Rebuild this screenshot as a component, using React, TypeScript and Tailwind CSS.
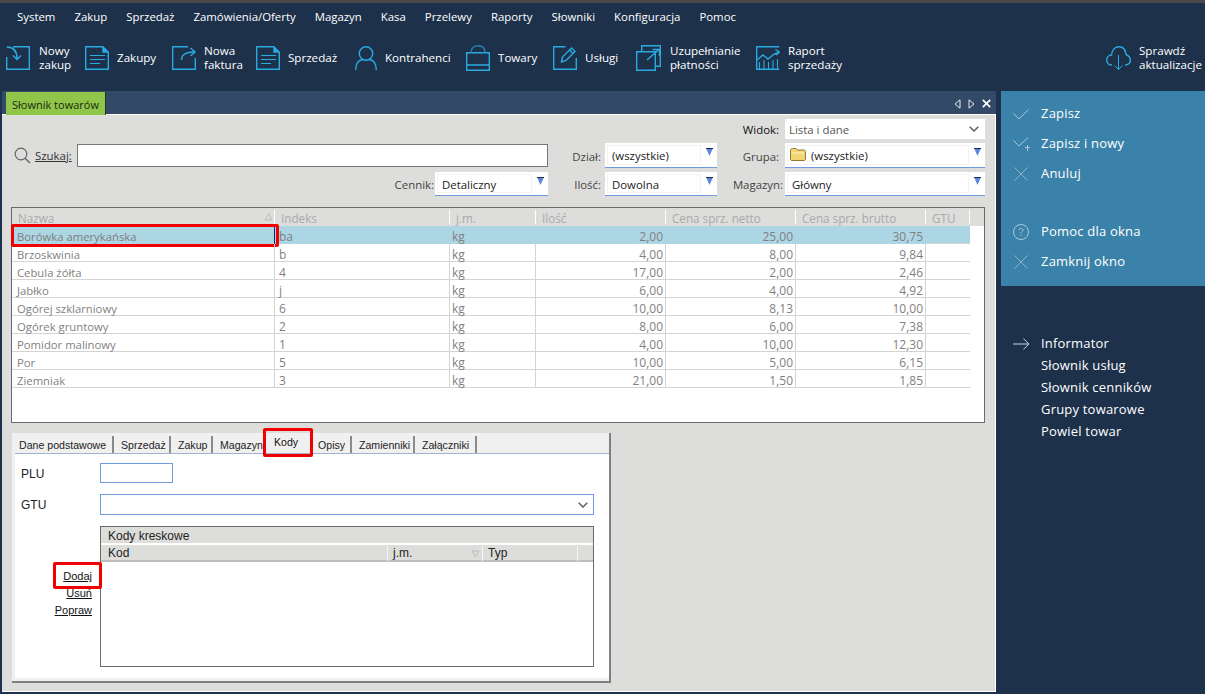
import type { ReactNode } from 'react';

const MENU = ['System', 'Zakup', 'Sprzedaż', 'Zamówienia/Oferty', 'Magazyn', 'Kasa', 'Przelewy', 'Raporty', 'Słowniki', 'Konfiguracja', 'Pomoc'];

const ROWS = [
  ['Borówka amerykańska', 'ba', 'kg', '2,00', '25,00', '30,75'],
  ['Brzoskwinia', 'b', 'kg', '4,00', '8,00', '9,84'],
  ['Cebula żółta', '4', 'kg', '17,00', '2,00', '2,46'],
  ['Jabłko', 'j', 'kg', '6,00', '4,00', '4,92'],
  ['Ogórej szklarniowy', '6', 'kg', '10,00', '8,13', '10,00'],
  ['Ogórek gruntowy', '2', 'kg', '8,00', '6,00', '7,38'],
  ['Pomidor malinowy', '1', 'kg', '4,00', '10,00', '12,30'],
  ['Por', '5', 'kg', '10,00', '5,00', '6,15'],
  ['Ziemniak', '3', 'kg', '21,00', '1,50', '1,85'],
];

const COLS = 'grid w-[958px] grid-cols-[263px_175px_86px_130px_130px_130px_44px]';
const CELL_PAD = ['pl-[5px] text-[11.3px]', 'pl-[4px]', 'pl-[2px]'];

function Ico({ children, w = 24, h = 24, className = '' }: { children: ReactNode; w?: number; h?: number; className?: string }) {
  return (
    <svg width={w} height={h} viewBox={`0 0 ${w} ${h}`} fill="none" stroke="currentColor" strokeWidth="1.4" className={className}>
      {children}
    </svg>
  );
}

const DocIcon = () => (
  <Ico>
    <path d="M.7.7H17.5L23.3 6.5V23.3H.7Z" />
    <path d="M18 1V6H23Z" fill="currentColor" />
    <path d="M5 9.5H20M5 13.5H20M5 17.5H15" strokeWidth="1.1" />
  </Ico>
);

function ToolButton({ icon, label, w }: { icon: ReactNode; label: ReactNode; w: string }) {
  return (
    <div className="flex items-center gap-[8px]">
      <div className="text-[#29abe2]">{icon}</div>
      <div className={`${w} whitespace-nowrap text-[11.6px] leading-[14px] text-white`}>{label}</div>
    </div>
  );
}

function Arrow() {
  return (
    <svg width="7" height="8" viewBox="0 0 7 8" className="absolute right-[4px] top-[5px]">
      <path d="M0 0H7L3.5 8Z" fill="#5b86dc" />
      <path d="M0 .5H7" stroke="#1d2c50" />
    </svg>
  );
}

function FilterSelect({ children, className = '' }: { children: ReactNode; className?: string }) {
  return (
    <div className={`relative h-full border-b border-[#6f9ade] bg-white p-[2px] pr-0 ${className}`}>
      <div className="flex h-full w-[calc(100%-16px)] items-center gap-[5px] border border-[#f2f2f2] pl-[4px] pt-[2px] text-[11.4px] text-[#222]">
        {children}
      </div>
      <Arrow />
    </div>
  );
}

function Chevron({ className = '' }: { className?: string }) {
  return (
    <svg width="10" height="6" viewBox="0 0 10 6" fill="none" stroke="#666" strokeWidth="1.6" className={className}>
      <path d="M.7.7L5 5 9.3.7" />
    </svg>
  );
}

function SideRow({ icon, label }: { icon?: ReactNode; label: string }) {
  return (
    <div className="flex h-[30px] items-center pl-[12px]">
      <div className="flex w-[28px] text-[#a9c9da]">{icon}</div>
      <span className="text-[13px] tracking-[.2px] text-white">{label}</span>
    </div>
  );
}

const Cross = () => (
  <Ico w={16} h={16} className="text-[#8fb4c9]">
    <path d="M1.5 1.5L14.5 14.5M14.5 1.5L1.5 14.5" strokeWidth="1" />
  </Ico>
);

const TABS = [
  { name: 'Dane podstawowe', w: 'w-[102px]', sep: true },
  { name: 'Sprzedaż', w: 'w-[57px]', sep: true },
  { name: 'Zakup', w: 'w-[42px]', sep: true },
  { name: 'Magazyn', w: 'w-[52px]', sep: false },
  { name: 'Kody', w: 'w-[46px]', sep: false },
  { name: 'Opisy', w: 'w-[41px]', sep: true },
  { name: 'Zamienniki', w: 'w-[63px]', sep: true },
  { name: 'Załączniki', w: 'w-[62px]', sep: true },
];

export default function App() {
  return (
    <div className="flex h-[694px] w-[1205px] flex-col overflow-hidden bg-[#1d314b] font-['Open_Sans',sans-serif] text-[12px]">
      <div className="h-[3px] bg-[#4a4a4a]" />

      {/* Menu */}
      <div className="flex h-[27px] items-center gap-[19px] pl-[17px] text-[11.4px] text-white">
        {MENU.map((m) => (
          <span key={m}>{m}</span>
        ))}
      </div>

      {/* Toolbar */}
      <div className="flex h-[61px] items-center gap-[15px] pb-[6px] pl-[6px]">
        <ToolButton
          w="ml-px w-[31px]"
          label={<>Nowy<br />zakup</>}
          icon={
            <Ico>
              <path d="M7 .7H23.3V23.3H.7V11" />
              <path d="M.7 1C7.5 1 11 4.5 11 12.5M7 9.5L11 13.5 15 9.5" />
            </Ico>
          }
        />
        <ToolButton w="w-[40px]" label="Zakupy" icon={<DocIcon />} />
        <ToolButton
          w="w-[37px]"
          label={<>Nowa<br />faktura</>}
          icon={
            <Ico>
              <path d="M23.3 12V23.3H.7V.7H16" />
              <path d="M9.5 14C9.5 8.5 14 6 22.5 6M18.5 2L23 6 18.5 10" />
            </Ico>
          }
        />
        <ToolButton w="w-[51px]" label="Sprzedaż" icon={<DocIcon />} />
        <div className="ml-px">
          <ToolButton
            w="w-[66px]"
            label="Kontrahenci"
            icon={
              <Ico w={22}>
                <circle cx="11" cy="7.5" r="6.7" />
                <path d="M.7 24C.7 17 4 14 8 13.5M21.3 24C21.3 17 18 14 14 13.5" />
              </Ico>
            }
          />
        </div>
        <ToolButton
          w="w-[40px]"
          label="Towary"
          icon={
            <Ico h={26}>
              <path d="M.7 7.7H23.3V25.3H.7ZM.7 20H23.3" />
              <path d="M5 7.5C5 3 8 .8 12 .8S19 3 19 7.5" stroke="#2b7fb0" />
            </Ico>
          }
        />
        <ToolButton
          w="w-[36px]"
          label="Usługi"
          icon={
            <Ico>
              <path d="M12.5.7H.7V23.3H23.3V12" />
              <path d="M8.5 16L9.5 11 18.5 2 22 5.5 13 14.5ZM16.5 4L20 7.5" />
            </Ico>
          }
        />
        <ToolButton
          w="ml-px w-[71px]"
          label={<>Uzupełnianie<br />płatności</>}
          icon={
            <Ico w={25} h={26}>
              <path d="M5.7 6V.7H24.3V21.3H20" />
              <path d="M.7 6.7H19.3V25.3H.7Z" />
              <path d="M11 15L23 4.5M16.5 4.5H23.5V11" />
            </Ico>
          }
        />
        <ToolButton
          w="w-[55px]"
          label={<>Raport<br />sprzedaży</>}
          icon={
            <Ico>
              <path d="M23.3 .7H.7V23.3H23.3" />
              <path d="M1 14L7 9 12 13 17.5 8.5 23 6M19.5 3.5L23.5 6 20 9" />
              <path d="M3.5 23V16M8 23V14M12.5 23V16M17 23V14M21.5 23V13" strokeWidth="1.1" />
            </Ico>
          }
        />
        <div className="ml-auto pr-[5px]">
          <ToolButton
            w="w-[61px]"
            label={<>Sprawdź<br />aktualizacje</>}
            icon={
              <Ico w={25}>
                <path d="M6 19H5.5C2.5 19 .7 16.5 .7 14 .7 11 3 9 5.5 9 6 4 9 .8 13 .8S19.5 4 20 8.5C22.5 9.5 24.3 11.5 24.3 14.5 24.3 17 22 19 19.5 19H19" />
                <path d="M12.5 9V23.5M8.5 19.5L12.5 23.5 16.5 19.5" strokeWidth="1" />
              </Ico>
            }
          />
        </div>
      </div>

      <div className="flex min-h-0 flex-1">
        {/* Main window */}
        <div className="flex w-[996px] flex-col pb-[2px] pl-[2px]">
          <div className="flex h-[23px] items-end justify-between bg-[#324a68] pl-[4px]">
            <div className="relative z-10 -mb-px flex h-[23px] w-[100px] items-center whitespace-nowrap border-r border-[#26331a] bg-[#8fc64a] pl-[6px] pt-[3px] text-[11px] text-[#1d2a10]">
              Słownik towarów
            </div>
            <div className="flex items-center gap-[7px] self-center pr-[5px] pt-[2px] text-white">
              <svg width="7" height="10" viewBox="0 0 7 10" fill="none" stroke="#e8e8e8"><path d="M6 .8L1 5 6 9.2Z" /></svg>
              <svg width="7" height="10" viewBox="0 0 7 10" fill="none" stroke="#e8e8e8"><path d="M1 .8L6 5 1 9.2Z" /></svg>
              <svg width="9" height="9" viewBox="0 0 9 9" fill="none" stroke="#fff" strokeWidth="1.7"><path d="M.8.8L8.2 8.2M8.2.8L.8 8.2" /></svg>
            </div>
          </div>

          <div className="flex min-h-0 flex-1 flex-col border-b border-r border-t border-white bg-[#dddddb]">
            {/* Filters */}
            <div className="grid grid-cols-[537px_57px_112px_68px_200px] grid-rows-[20px_25px_24px] gap-y-[4px] pl-[9px] pt-[4px] text-[11.4px]">
              <div className="col-span-3" />
              <div className="flex items-center justify-end pr-[6px] pt-[2px] text-[#111]">Widok:</div>
              <div className="flex items-center justify-between bg-white pl-[4px] pr-[6px] text-[#555]">
                <span className="pt-[2px]">Lista i dane</span>
                <Chevron />
              </div>

              <div className="flex items-center pl-[3px]">
                <svg width="17" height="17" viewBox="0 0 17 17" fill="none" stroke="#666" strokeWidth="1.2" className="mr-[4px]">
                  <circle cx="7" cy="7" r="5.8" />
                  <path d="M11 11.2L16 16" strokeWidth="1.5" />
                </svg>
                <span className="mr-[4px] w-[38px] whitespace-nowrap text-[#333] underline">Szukaj:</span>
                <div className="h-[23px] flex-1 border border-[#777] bg-white" />
              </div>
              <div className="flex items-center justify-end pr-[4px] pt-[2px] text-[#444]">Dział:</div>
              <FilterSelect>(wszystkie)</FilterSelect>
              <div className="flex items-center justify-end pr-[6px] pt-[2px] text-[#444]">Grupa:</div>
              <FilterSelect>
                <svg width="16" height="13" viewBox="0 0 16 13" className="-ml-[2px] -mt-[3px]">
                  <path d="M.5 2.5C.5 1 1.5.5 2.5.5H6L7.5 2H14C15 2 15.5 3 15.5 4V11C15.5 12 15 12.5 14 12.5H2C1 12.5.5 12 .5 11Z" fill="#f2d675" stroke="#96772a" />
                  <path d="M1.5 5H14.5" stroke="#fff3b8" />
                </svg>
                (wszystkie)
              </FilterSelect>

              <div className="flex items-center justify-end">
                <span className="pr-[1px] pt-[2px] text-[#444]">Cennik:</span>
                <FilterSelect className="w-[113px] shrink-0">Detaliczny</FilterSelect>
              </div>
              <div className="flex items-center justify-end pr-[4px] pt-[2px] text-[#444]">Ilość:</div>
              <FilterSelect>Dowolna</FilterSelect>
              <div className="flex items-center justify-end pr-[2px] pt-[2px] text-[#444]">Magazyn:</div>
              <FilterSelect>Główny</FilterSelect>
            </div>

            {/* Product list */}
            <div className="ml-[9px] mt-[11px] h-[216px] w-[974px] border border-[#6b6b6b] bg-white">
              <div className="bg-[#dddddb]">
                <div className={`${COLS} h-[18px] text-[11.7px] text-[#aaa]`}>
                  {['Nazwa', 'Indeks', 'j.m.', 'Ilość', 'Cena sprz. netto', 'Cena sprz. brutto', 'GTU'].map((h, i) => (
                    <div key={h} className="relative pl-[6px] pt-[2px] leading-[16px]">
                      {h}
                      <div className="absolute bottom-[2px] right-0 top-[2px] w-px bg-white" />
                      {i === 0 && (
                        <svg width="9" height="8" viewBox="0 0 9 8" fill="none" stroke="#bbb" className="absolute right-[2px] top-[5px]"><path d="M4.5 .8L8 7H1Z" /></svg>
                      )}
                    </div>
                  ))}
                </div>
              </div>
              {ROWS.map((r, i) => (
                <div key={r[0]} className={`${COLS} relative h-[18px] text-[#7f7f7f] ${i === 0 ? 'bg-[#add6e5]' : ''}`}>
                  {r.map((c, j) => (
                    <div
                      key={j}
                      className={`h-[18px] border-b border-r border-[#d4d4d4] pt-[3px] leading-[15px] ${j < 3 ? CELL_PAD[j] : 'pr-[2px] text-right'} ${i === 0 ? 'border-transparent' : ''}`}
                    >
                      {c}
                    </div>
                  ))}
                  <div className="border-b border-[#d4d4d4]" />
                  {i === 0 && (
                    <>
                      <div className="absolute left-0 top-0 h-[18px] w-[263px] border-r border-[#14206e]" />
                      <div className="absolute -left-px -top-[2px] h-[23px] w-[268px] rounded-[2px] border-[3px] border-[#f00000]" />
                    </>
                  )}
                </div>
              ))}
            </div>

            {/* Detail tabs */}
            <div className="ml-[10px] mt-[10px] flex h-[250px] w-[599px] flex-col border-b-2 border-r-2 border-[#808080] bg-[#f0f0f0] font-['Liberation_Sans',sans-serif] text-[11px]">
              <div className="flex h-[20px] shrink-0 items-end text-[10.6px]">
                {TABS.map((t) => (
                  <div
                    key={t.name}
                    className={`relative flex h-[17px] items-center whitespace-nowrap ${t.w} ${t.name === 'Kody' ? 'pb-[3px] pl-[9px] text-[#111]' : 'pl-[7px] pt-[2px] text-[#222]'} ${t.sep ? 'border-r-2 border-[#8a8a8a]' : ''}`}
                  >
                    {t.name}
                    {t.name === 'Kody' && (
                      <div className="absolute -bottom-[4px] -left-[2px] -right-[2px] -top-[8px] rounded-[2px] border-[3px] border-[#f00000]" />
                    )}
                  </div>
                ))}
              </div>
              <div className="mb-[3px] ml-[3px] flex min-h-0 flex-1 flex-col border-t border-[#a0b4d0] bg-white pt-[9px] text-[#222]">
                <div className="flex h-[20px] items-center">
                  <div className="w-[85px] pl-[6px] pt-[1px] text-[12px]">PLU</div>
                  <div className="h-full w-[73px] border border-[#6f9ade]" />
                </div>
                <div className="mt-[11px] flex h-[21px] items-center">
                  <div className="w-[85px] pl-[6px] pt-[1px] text-[12px]">GTU</div>
                  <div className="flex h-full w-[494px] items-center justify-end border border-[#6f9ade] pr-[5px]">
                    <Chevron />
                  </div>
                </div>
                <div className="mt-[11px] flex">
                  <div className="relative flex w-[85px] flex-col items-end pr-[8px] pt-[42px] text-[#111]">
                    <span className="h-[17px] leading-[17px] underline">Dodaj</span>
                    <span className="h-[17px] leading-[17px] underline">Usuń</span>
                    <span className="h-[17px] leading-[17px] underline">Popraw</span>
                    <div className="absolute left-[38px] top-[36px] h-[27px] w-[49px] rounded-[2px] border-[3px] border-[#f00000]" />
                  </div>
                  <div className="h-[141px] w-[494px] border border-[#6b6b6b] text-[12px]">
                    <div className="flex h-[18px] items-center border-b-2 border-white bg-[#dddddb] pl-[7px] pt-[1px]">Kody kreskowe</div>
                    <div className="grid h-[17px] grid-cols-[287px_95px_95px_1fr] border-b-2 border-[#bdbdbd] bg-[#dddddb] pt-px leading-[15px]">
                      <div className="border-r border-[#f5f5f5] pl-[7px]">Kod</div>
                      <div className="relative border-r border-[#f5f5f5] pl-[5px]">
                        j.m.
                        <svg width="9" height="8" viewBox="0 0 9 8" fill="none" stroke="#bbb" className="absolute right-[2px] top-[4px]"><path d="M1 1H8L4.5 7Z" /></svg>
                      </div>
                      <div className="border-r border-[#f5f5f5] pl-[5px]">Typ</div>
                      <div />
                    </div>
                  </div>
                </div>
              </div>
            </div>
          </div>
        </div>

        {/* Right action panel */}
        <div className="ml-[5px] flex flex-1 flex-col">
          <div className="h-[195px] bg-[#3b82aa] pt-[8px]">
            <SideRow
              label="Zapisz"
              icon={<Ico w={16} h={11}><path d="M.5 4.5L6 10 15.5 .5" strokeWidth="1" /></Ico>}
            />
            <SideRow
              label="Zapisz i nowy"
              icon={<Ico w={17} h={15}><path d="M.5 3.5L6 9 15 .5M12 10.5H17M14.5 8V14" strokeWidth="1" /></Ico>}
            />
            <SideRow label="Anuluj" icon={<Cross />} />
            <div className="h-[28px]" />
            <SideRow
              label="Pomoc dla okna"
              icon={
                <Ico w={16} h={16}>
                  <circle cx="8" cy="8" r="7.5" strokeWidth="1" />
                  <path d="M6 6.2C6 5 7 4.3 8 4.3S10 5 10 6.2C10 7.5 8 7.8 8 9.5M8 11V12" strokeWidth="1" />
                </Ico>
              }
            />
            <SideRow label="Zamknij okno" icon={<Cross />} />
          </div>
          <div className="mt-[47px] flex flex-col text-[13px] tracking-[.2px] text-white">
            <div className="flex h-[22px] items-center pl-[12px]">
              <div className="w-[28px] text-[#c9d2dc]">
                <Ico w={17} h={12}><path d="M0 6H16M10.5 .7L16 6 10.5 11.3" strokeWidth="1" /></Ico>
              </div>
              Informator
            </div>
            {['Słownik usług', 'Słownik cenników', 'Grupy towarowe', 'Powiel towar'].map((l) => (
              <div key={l} className="flex h-[22px] items-center pl-[40px]">{l}</div>
            ))}
          </div>
        </div>
      </div>
    </div>
  );
}
